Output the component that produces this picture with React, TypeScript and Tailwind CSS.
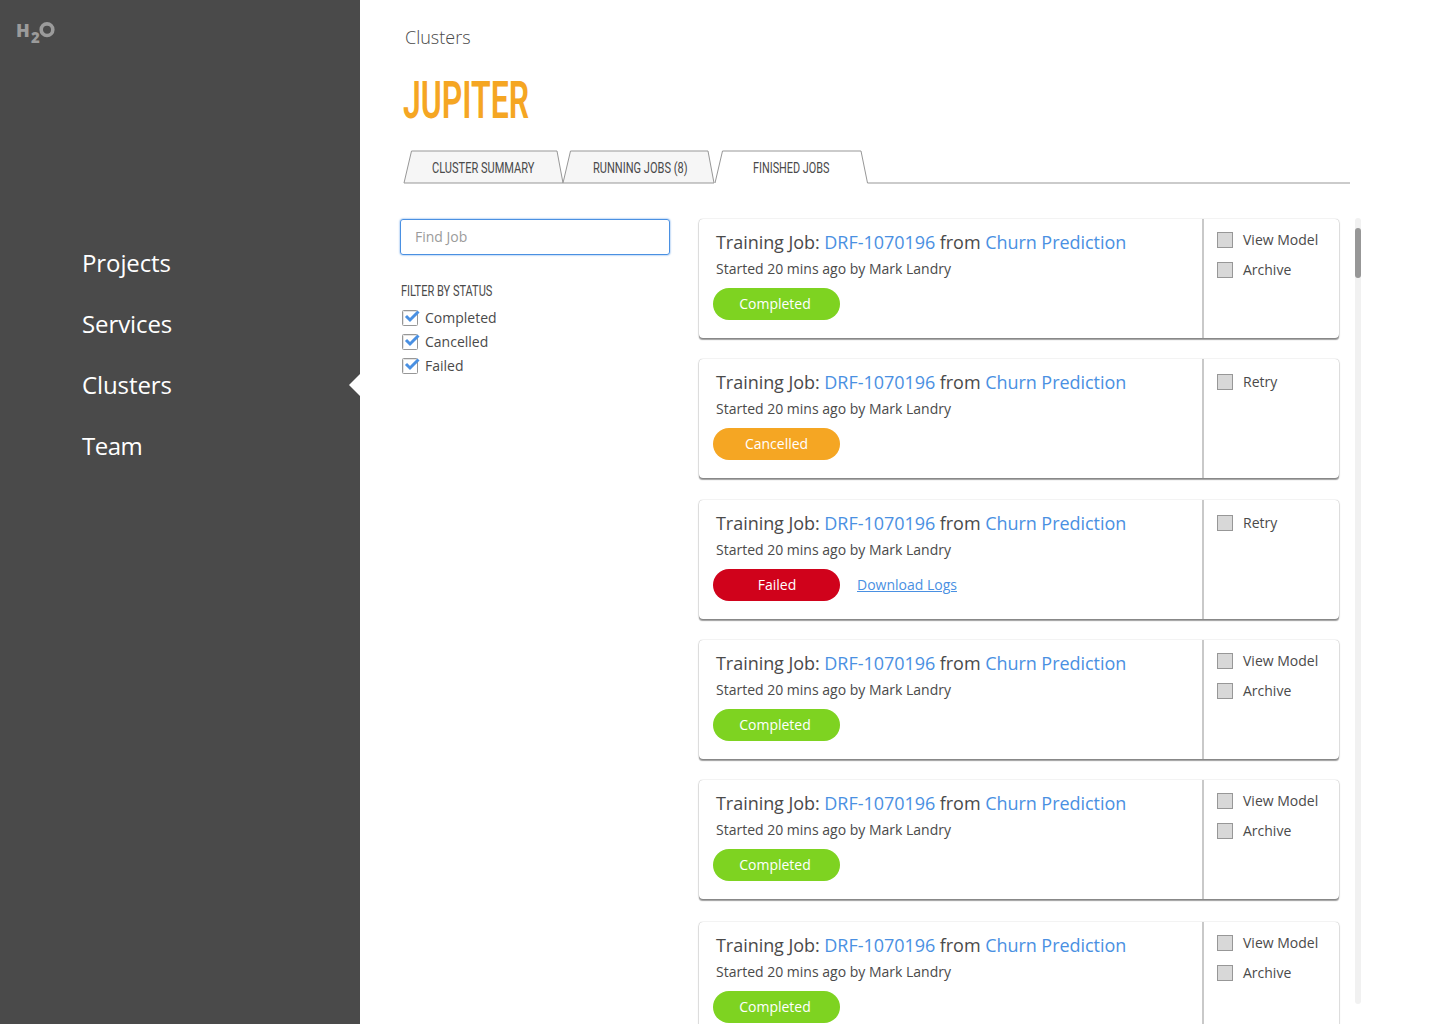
import React from "react";

type Status = "Completed" | "Cancelled" | "Failed";

const jobs: { status: Status; gap: string }[] = [
  { status: "Completed", gap: "" },
  { status: "Cancelled", gap: "mt-[21px]" },
  { status: "Failed", gap: "mt-[22px]" },
  { status: "Completed", gap: "mt-[21px]" },
  { status: "Completed", gap: "mt-[21px]" },
  { status: "Completed", gap: "mt-[23px]" },
];

const pillColor: Record<Status, string> = {
  Completed: "bg-[#7ed321]",
  Cancelled: "bg-[#f5a623]",
  Failed: "bg-[#d0021b]",
};

function Logo() {
  return (
    <div className="ml-[16px] mt-[19px] flex h-6 items-start font-extrabold text-[#9b9b9b]">
      <span className="w-[15px] text-[18px] leading-[22px]">H</span>
      <span className="mt-[10px] w-2 text-[15px] leading-[16px]">2</span>
      <svg className="mt-[3px]" width="16" height="16" viewBox="0 0 16 16">
        <circle cx="8" cy="7.700" r="5.800" fill="none" stroke="#9b9b9b" strokeWidth="3.600" />
      </svg>
    </div>
  );
}

function Sidebar() {
  return (
    <aside className="flex w-[360px] shrink-0 flex-col bg-[#4a4a4a]">
      <Logo />
      <nav className="mt-[189px] flex flex-col text-2xl tracking-[-0.1px] text-white">
        {["Projects", "Services", "Clusters", "Team"].map((item) => (
          <a key={item} className="flex h-[61px] items-center justify-between pl-[82px] last:tracking-[-0.5px]">
            {item}
            {item === "Clusters" && (
              <svg width="11" height="22" viewBox="0 0 11 22">
                <path d="M11 0V22L0 11Z" fill="#fff" />
              </svg>
            )}
          </a>
        ))}
      </nav>
    </aside>
  );
}

function Tabs() {
  return (
    <div className="relative ml-[43px] mt-[21px] h-[35px] w-[948px]">
      <svg className="absolute inset-0" width="948" height="35" viewBox="0 0 948 35" fill="none" stroke="#979797">
        <path d="M1 33L8.500 1H154L160 33Z" fill="#f6f6f6" />
        <path d="M160 33L167.500 1H305L311 33Z" fill="#f6f6f6" />
        <path d="M312 33L319.500 1H458L464.500 33H947" />
      </svg>
      <div className="relative flex h-[35px] items-center pt-[3px] font-['Roboto'] text-[15.500px] text-[#4a4a4a]">
        <span className="ml-[29px] w-[161px] origin-left scale-x-[0.712] whitespace-nowrap">CLUSTER SUMMARY</span>
        <span className="w-40 origin-left scale-x-[0.712] whitespace-nowrap">RUNNING JOBS (8)</span>
        <span className="origin-left scale-x-[0.7] whitespace-nowrap">FINISHED JOBS</span>
      </div>
    </div>
  );
}

function Filters() {
  return (
    <section className="w-[299px] shrink-0">
      <div className="flex h-9 w-[270px] items-center rounded-[3px] border border-[#4a90e2] pl-[14px] text-sm text-[#9b9b9b] shadow-[0_0_2px_#4a90e2]">
        Find Job
      </div>
      <h2 className="ml-px mt-[26px] origin-left scale-x-[0.712] whitespace-nowrap font-['Roboto'] text-[15.500px] leading-5 text-[#4a4a4a]">
        FILTER BY STATUS
      </h2>
      <ul className="mt-[5px] text-sm text-[#4a4a4a]">
        {["Completed", "Cancelled", "Failed"].map((label) => (
          <li key={label} className="flex h-6 items-center gap-[5px] pl-0.5">
            <svg width="18" height="18" viewBox="0 0 18 18" fill="none">
              <rect x="0.500" y="1.500" width="15" height="15" rx="1" fill="#fff" stroke="#979797" />
              <path d="M1.500 15.500V2.500H15" stroke="#e4e4e4" />
              <path d="M4 7L8 11L16.500 2.500" stroke="#4a90e2" strokeWidth="3" />
            </svg>
            {label}
          </li>
        ))}
      </ul>
    </section>
  );
}

function JobCard({ status, gap }: { status: Status; gap: string }) {
  const completed = status === "Completed";
  return (
    <article className={`flex h-[119px] w-[640px] shrink-0 rounded-[4px] bg-white text-sm text-[#4a4a4a] shadow-[0_0_1px_rgba(0,0,0,0.35),0_1px_2px_rgba(0,0,0,0.25),0_2px_1px_-0.5px_rgba(0,0,0,0.32)] ${gap}`}>
      <div className="w-[503px]">
        <h3 className="ml-[17px] mt-[10px] whitespace-nowrap text-lg leading-[26px] tracking-[-0.045px]">
          Training Job: <a className="text-[#4a90e2]">DRF-1070196</a> from{" "}
          <a className="text-[#4a90e2]">Churn Prediction</a>
        </h3>
        <p className="ml-[17px] mt-1 leading-5">Started 20 mins ago by Mark Landry</p>
        <div className="ml-[14px] mt-[9px] flex items-center gap-[17px]">
          <span className={`flex h-8 w-[127px] items-center justify-center rounded-full text-white ${pillColor[status]}`}>
            <span className={completed ? "-ml-[3px]" : status === "Failed" ? "ml-px" : ""}>{status}</span>
          </span>
          {status === "Failed" && <a className="text-[#4a90e2] underline">Download Logs</a>}
        </div>
      </div>
      <div className={`flex flex-1 flex-col gap-[10px] border-l-2 border-[#c9c9c9] pl-[13px] ${completed ? "pt-[11px]" : "pt-[13px]"}`}>
        {(completed ? ["View Model", "Archive"] : ["Retry"]).map((action) => (
          <div key={action} className="flex h-5 items-center gap-[10px]">
            <span className="size-4 border border-[#979797] bg-[#d8d8d8]" />
            {action}
          </div>
        ))}
      </div>
    </article>
  );
}

export default function App() {
  return (
    <div className="flex h-[1024px] w-[1440px] overflow-hidden bg-white font-['Open_Sans',sans-serif]">
      <Sidebar />
      <main className="flex min-w-0 flex-1 flex-col">
        <p className="ml-[45px] mt-[24px] text-lg font-light leading-[26px] text-[#4a4a4a]">Clusters</p>
        <h1 className="ml-[43px] mt-[23px] w-60 origin-left scale-x-[0.627] font-['Roboto'] text-[51px] font-semibold leading-[56px] text-[#f5a623]">
          JUPITER
        </h1>
        <Tabs />
        <div className="ml-10 mt-[34px] flex min-h-0 flex-1">
          <Filters />
          <section className="flex w-[640px] flex-col">
            {jobs.map((job, i) => (
              <JobCard key={i} {...job} />
            ))}
          </section>
          <div className="-mt-px ml-4 h-[786px] w-1.5 rounded-full bg-[#f1f1f1] pt-[10px]">
            <div className="h-[50px] rounded-full bg-[#979797]" />
          </div>
        </div>
      </main>
    </div>
  );
}
